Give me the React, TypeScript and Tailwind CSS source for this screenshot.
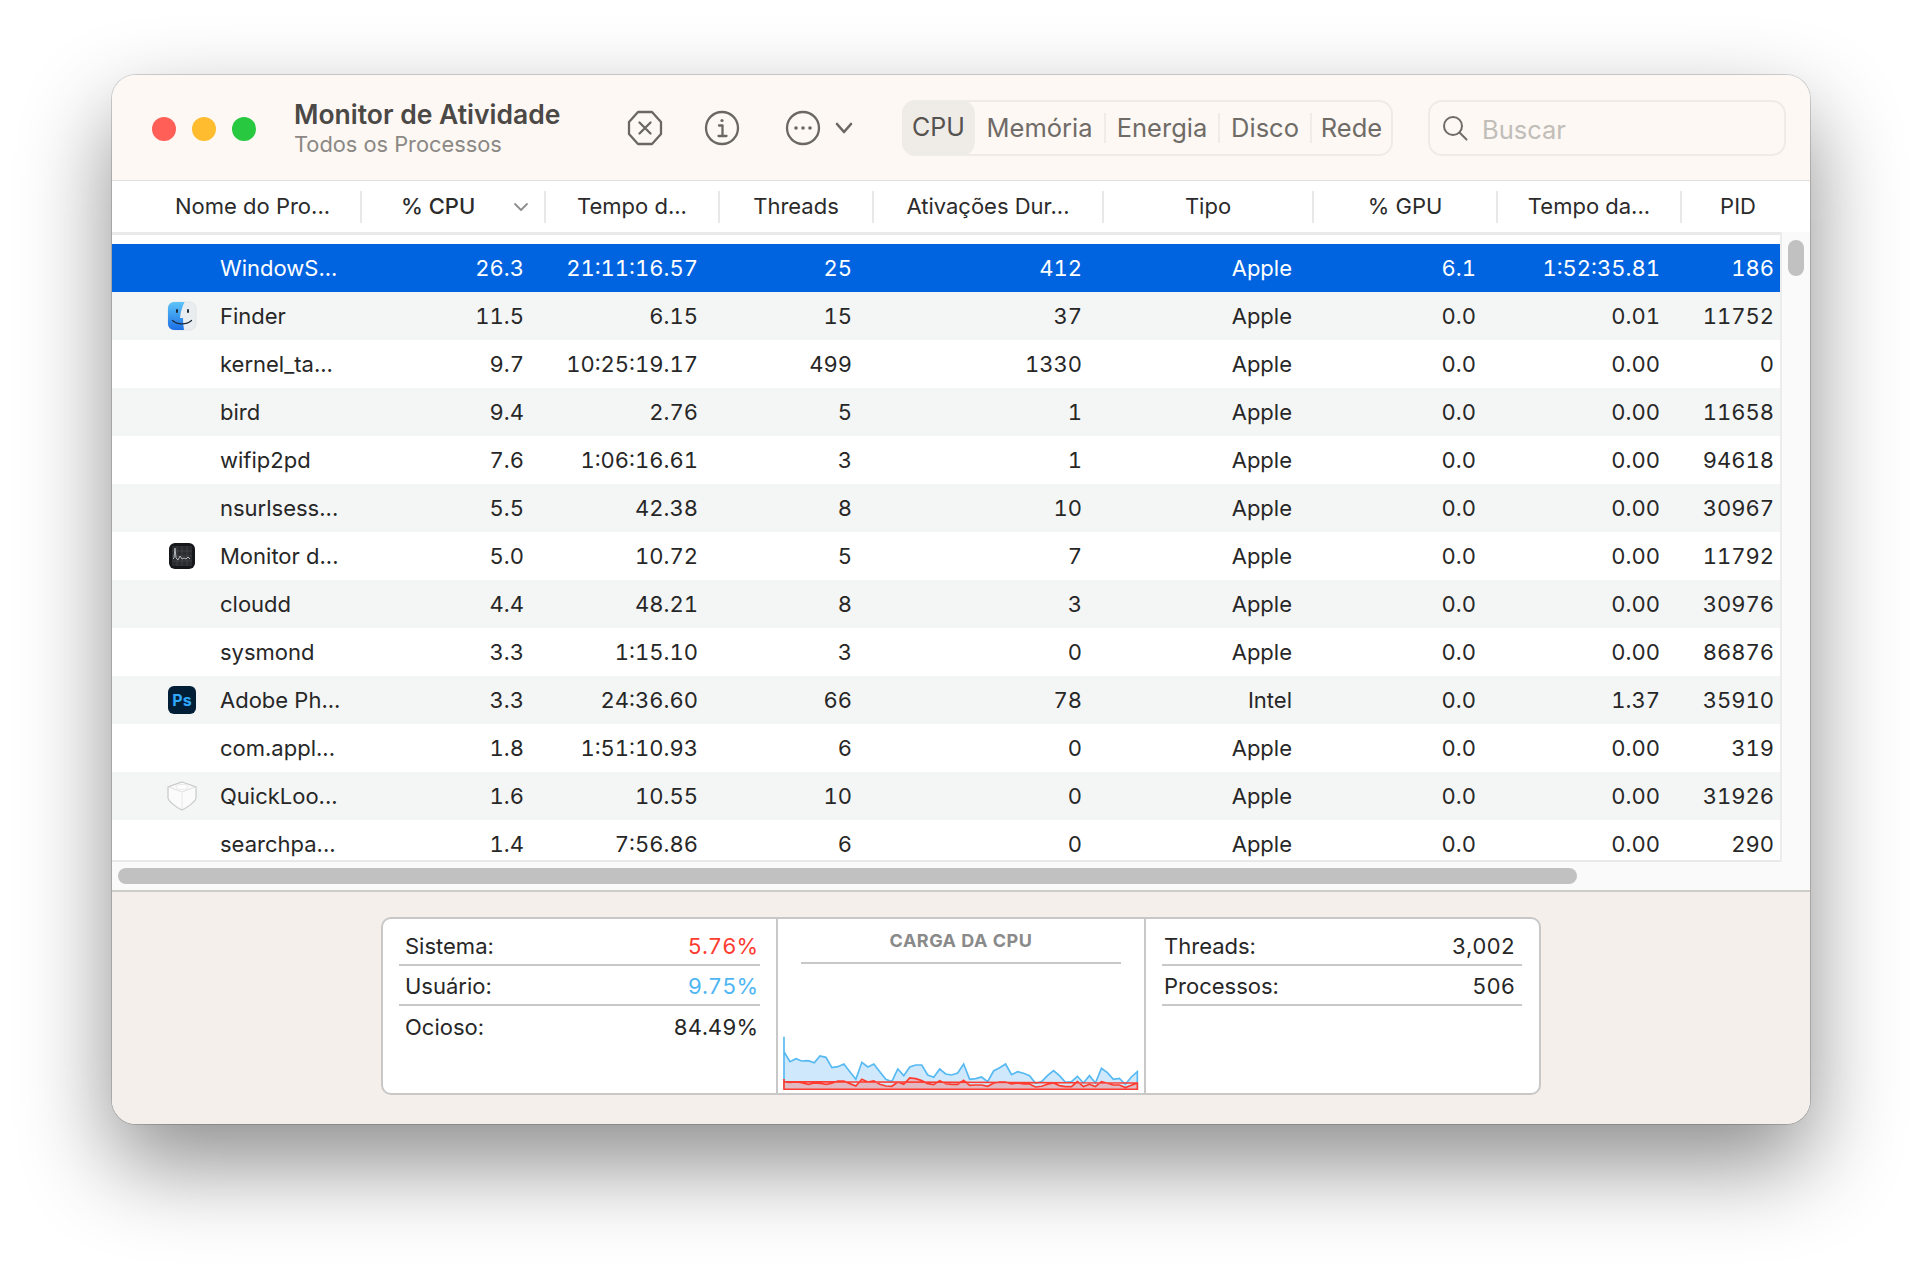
const COLUMNS = "grid-cols-[249px_184px_174px_154px_230px_210px_184px_184px_99px]";

const HEADERS = ["Tempo d...", "Threads", "Ativações Dur...", "Tipo", "% GPU", "Tempo da..."];

type Row = { icon?: "finder" | "monitor" | "ps" | "quicklook"; cells: string[] };

const ROWS: Row[] = [
  { cells: ["WindowS...", "26.3", "21:11:16.57", "25", "412", "Apple", "6.1", "1:52:35.81", "186"] },
  { icon: "finder", cells: ["Finder", "11.5", "6.15", "15", "37", "Apple", "0.0", "0.01", "11752"] },
  { cells: ["kernel_ta...", "9.7", "10:25:19.17", "499", "1330", "Apple", "0.0", "0.00", "0"] },
  { cells: ["bird", "9.4", "2.76", "5", "1", "Apple", "0.0", "0.00", "11658"] },
  { cells: ["wifip2pd", "7.6", "1:06:16.61", "3", "1", "Apple", "0.0", "0.00", "94618"] },
  { cells: ["nsurlsess...", "5.5", "42.38", "8", "10", "Apple", "0.0", "0.00", "30967"] },
  { icon: "monitor", cells: ["Monitor d...", "5.0", "10.72", "5", "7", "Apple", "0.0", "0.00", "11792"] },
  { cells: ["cloudd", "4.4", "48.21", "8", "3", "Apple", "0.0", "0.00", "30976"] },
  { cells: ["sysmond", "3.3", "1:15.10", "3", "0", "Apple", "0.0", "0.00", "86876"] },
  { icon: "ps", cells: ["Adobe Ph...", "3.3", "24:36.60", "66", "78", "Intel", "0.0", "1.37", "35910"] },
  { cells: ["com.appl...", "1.8", "1:51:10.93", "6", "0", "Apple", "0.0", "0.00", "319"] },
  { icon: "quicklook", cells: ["QuickLoo...", "1.6", "10.55", "10", "0", "Apple", "0.0", "0.00", "31926"] },
  { cells: ["searchpa...", "1.4", "7:56.86", "6", "0", "Apple", "0.0", "0.00", "290"] },
];

const BLUE = "42,100 60,130 78,121 95,128 115,127 133,133 150,113 168,117 186,148 204,145 222,137 240,160 258,183 276,132 294,146 312,137 330,160 348,183 366,190 384,152 402,172 420,146 438,140 456,140 474,170 492,177 510,152 528,167 546,170 564,164 582,137 600,183 618,181 636,176 654,190 672,158 690,148 708,137 726,169 744,160 762,165 780,172 798,195 816,190 834,172 852,157 870,172 888,192 906,190 924,174 942,194 960,172 978,194 996,150 1014,163 1032,183 1050,180 1068,198 1086,176 1104,160";
const RED = "42,190 60,192 78,191 95,193 115,198 133,194 150,195 168,198 186,195 204,188 222,188 240,196 258,203 276,183 294,191 312,188 330,198 348,203 366,204 384,191 402,198 420,179 438,181 456,187 474,196 492,199 510,187 528,196 546,198 564,198 582,186 600,201 618,200 636,200 654,204 672,195 690,191 708,191 726,197 744,194 762,197 780,197 798,206 816,204 834,198 852,194 870,202 888,205 906,205 924,190 942,205 960,198 978,205 996,190 1014,195 1032,200 1050,200 1068,208 1086,201 1104,194";

function FinderIcon() {
  return (
    <svg width="30" height="30" viewBox="0 0 30 30">
      <defs>
        <linearGradient id="finderBlue" x1="0" y1="0" x2="0" y2="1">
          <stop offset="0" stopColor="#5cc4f8" />
          <stop offset="1" stopColor="#1c6fe6" />
        </linearGradient>
      </defs>
      <rect x="1" y="1" width="28" height="28" rx="6" fill="#e9edf0" stroke="#d5d8da" strokeWidth=".5" />
      <path d="M7 1h10.500C15 6 13.400 12 13 17h3c0 4 .3 8 1 12H7a6 6 0 0 1-6-6V7a6 6 0 0 1 6-6z" fill="url(#finderBlue)" />
      <rect x="9" y="8" width="2" height="4" rx="1" fill="#1d2b3a" />
      <rect x="20" y="8" width="2" height="4" rx="1" fill="#1d2b3a" />
      <path d="M5.500 19.500c5 4.500 14 4.500 19 0" fill="none" stroke="#1d2b3a" strokeWidth="1.300" strokeLinecap="round" />
    </svg>
  );
}

function MonitorIcon() {
  return (
    <svg width="28" height="28" viewBox="0 0 28 28">
      <rect x="1" y="1" width="26" height="26" rx="6" fill="#15171a" />
      <rect x="4" y="4" width="20" height="20" fill="#2a2c2f" />
      <path d="M4 9h20M4 14h20M4 19h20M9 4v20M14 4v20M19 4v20" stroke="#4a4d50" strokeWidth=".6" />
      <path d="M5 17l1-1 1-10 1 10 2 2 2-4 2 3 2-1 2 1 2-2 2 2" fill="none" stroke="#b4b8bc" strokeWidth="1" />
    </svg>
  );
}

function PsIcon() {
  return (
    <div className="w-[28px] h-[28px] rounded-[6px] bg-[#001e36] flex items-center justify-center text-[#31a8ff] text-[16px] font-bold leading-none">
      Ps
    </div>
  );
}

function QuickLookIcon() {
  return (
    <svg width="32" height="32" viewBox="0 0 32 32">
      <path d="M16 2l14 5v11c0 3-9 10-14 12C11 28 2 21 2 18V7z" fill="#fbfbfb" stroke="#c9c9c9" strokeWidth="1.200" />
      <path d="M3 7l13 5 13-5" fill="none" stroke="#e0e0e0" strokeWidth="1" />
      <path d="M16 12v17" stroke="#e8e8e8" strokeWidth="1" />
      <ellipse cx="16" cy="7" rx="6" ry="2.500" fill="#fff" stroke="#e2e2e2" strokeWidth=".8" />
    </svg>
  );
}

function ProcessIcon({ name }: { name: Row["icon"] }) {
  if (name === "finder") return <FinderIcon />;
  if (name === "monitor") return <MonitorIcon />;
  if (name === "ps") return <PsIcon />;
  if (name === "quicklook") return <QuickLookIcon />;
  return null;
}

function TableRow({ row, index }: { row: Row; index: number }) {
  const selected = index === 0;
  const [name, ...rest] = row.cells;
  return (
    <div
      className={`grid ${COLUMNS} h-[48px] items-center text-[22px] ${
        selected ? "bg-[#0064e1] text-white" : index % 2 === 1 ? "bg-[#f4f5f5] text-[#272727]" : "bg-white text-[#272727]"
      }`}
    >
      <div className="flex items-center">
        <div className="w-[108px] pl-[32px] flex items-center justify-center">
          <ProcessIcon name={row.icon} />
        </div>
        <span>{name}</span>
      </div>
      {rest.map((cell, i) => (
        <div key={i} className={`text-right tabular-nums ${i === 7 ? "pr-[6px]" : "pr-[21px]"}`}>
          {cell}
        </div>
      ))}
    </div>
  );
}

function TitleBar() {
  return (
    <div className="h-[106px] shrink-0 flex bg-[#fdf8f3] border-b-[1px] border-[#e2dfdc] rounded-t-[24px]">
      <div className="flex items-center gap-[16px] ml-[40px] mt-[1px] h-full">
        <span className="w-[24px] h-[24px] rounded-full bg-[#ff5f57]" />
        <span className="w-[24px] h-[24px] rounded-full bg-[#febc2e]" />
        <span className="w-[24px] h-[24px] rounded-full bg-[#28c840]" />
      </div>
      <div className="ml-[38px] pt-[22px] w-[333px] shrink-0">
        <div className="text-[26.5px] leading-[34px] font-semibold text-[#4b4846]">Monitor de Atividade</div>
        <div className="text-[21.8px] leading-[27px] text-[#8b8885]">Todos os Processos</div>
      </div>
      <div className="flex items-center h-full text-[#6a6764]">
        <svg width="36" height="36" viewBox="0 0 36 36" fill="none" stroke="currentColor" strokeWidth="2.300">
          <path d="M11 2h14l9 10v12l-9 10H11L2 24V12z" strokeLinejoin="round" />
          <path d="M12.500 12.500l11 11M23.500 12.500l-11 11" strokeLinecap="round" />
        </svg>
        <svg className="ml-[41px]" width="36" height="36" viewBox="0 0 36 36" fill="none" stroke="currentColor" strokeWidth="2.300">
          <circle cx="18" cy="18" r="16" />
          <circle cx="18" cy="10.500" r="1.600" fill="currentColor" stroke="none" />
          <path d="M15 15.500h3.500V26M14.500 26h8" strokeLinecap="round" strokeLinejoin="round" />
        </svg>
        <svg className="ml-[45px]" width="36" height="36" viewBox="0 0 36 36" fill="none" stroke="currentColor" strokeWidth="2.300">
          <circle cx="18" cy="18" r="16" />
          <circle cx="11" cy="18" r="1.800" fill="currentColor" stroke="none" />
          <circle cx="18" cy="18" r="1.800" fill="currentColor" stroke="none" />
          <circle cx="25" cy="18" r="1.800" fill="currentColor" stroke="none" />
        </svg>
        <svg className="ml-[14px]" width="18" height="12" viewBox="0 0 18 12" fill="none" stroke="currentColor" strokeWidth="2.600">
          <path d="M2 2l7 8 7-8" strokeLinecap="round" strokeLinejoin="round" />
        </svg>
      </div>
      <div className="ml-[49px] mt-[25px] h-[56px] w-[491px] shrink-0 flex items-center rounded-[14px] border-[2px] border-[#efebe6] text-[25.5px] text-[#6f6b67]">
        <div className="w-[73px] h-[56px] -ml-[2px] rounded-[14px] bg-[#efebe6] text-[25px] text-[#55524f] flex items-center justify-center">CPU</div>
        <div className="w-[129px] text-center">Memória</div>
        <div className="h-[30px] w-[2px] bg-[#f0ece7]" />
        <div className="w-[112px] text-center">Energia</div>
        <div className="h-[30px] w-[2px] bg-[#f0ece7]" />
        <div className="w-[90px] text-center">Disco</div>
        <div className="h-[30px] w-[2px] bg-[#f0ece7]" />
        <div className="w-[79px] text-center">Rede</div>
      </div>
      <div className="ml-[35px] mt-[25px] h-[56px] w-[358px] shrink-0 flex items-center rounded-[14px] border-[2px] border-[#efebe6] pl-[12px]">
        <svg width="26" height="26" viewBox="0 0 26 26" fill="none" stroke="#6f6b67" strokeWidth="2">
          <circle cx="11" cy="11" r="9" />
          <path d="M17.500 17.500l7 7" strokeLinecap="round" />
        </svg>
        <span className="ml-[14px] mt-[5px] text-[25.5px] text-[#c1bdb9]">Buscar</span>
      </div>
    </div>
  );
}

function TableHeader() {
  return (
    <div className="h-[51px] shrink-0 flex items-center bg-white text-[22px] text-[#2b2b2b]">
      <div className="w-[250px] h-[32px] pl-[63px] flex items-center border-r-[2px] border-[#e8e8e8]">Nome do Pro...</div>
      <div className="w-[184px] h-[32px] pl-[39px] flex items-center font-medium border-r-[2px] border-[#e8e8e8]">
        % CPU
        <svg className="ml-[38px]" width="16" height="10" viewBox="0 0 16 10" fill="none" stroke="#8e8e8e" strokeWidth="1.800">
          <path d="M2 2l6 6 6-6" strokeLinecap="round" strokeLinejoin="round" />
        </svg>
      </div>
      {HEADERS.map((h, i) => (
        <div
          key={h}
          className={`h-[32px] flex items-center justify-center border-r-[2px] border-[#e8e8e8] ${
            ["w-[174px]", "w-[154px]", "w-[230px]", "w-[210px]", "w-[184px]", "w-[184px]"][i]
          }`}
        >
          {h}
        </div>
      ))}
      <div className="w-[112px] text-center">PID</div>
    </div>
  );
}

function StatRow({ label, value, tone, line, inset }: { label: string; value: string; tone?: string; line?: boolean; inset: string }) {
  return (
    <div className={`h-[40px] pt-[2px] flex items-center justify-between ${inset} ${line ? "border-b-[2px] border-[#c8c8c8]" : ""}`}>
      <span>{label}</span>
      <span className={`tabular-nums ${tone ?? ""}`}>{value}</span>
    </div>
  );
}

export default function App() {
  return (
    <div className="w-[1922px] h-[1272px] overflow-hidden bg-white pt-[75px] pl-[112px] font-['Inter',sans-serif]">
      <div className="w-[1698px] h-[1049px] flex flex-col rounded-[24px] bg-white shadow-[0_40px_90px_0_rgba(0,0,0,0.45),0_0_0_1px_rgba(0,0,0,0.16)]">
        <TitleBar />
        <TableHeader />
        <div className="flex h-[630px] shrink-0">
          <div className="w-[1668px] pt-[9px] h-full overflow-hidden border-t-[3px] border-b-[2px] border-[#e9e9e9]">
            {ROWS.map((row, i) => (
              <TableRow key={row.cells[0]} row={row} index={i} />
            ))}
          </div>
          <div className="flex-1 pt-[8px] pl-[6px] bg-[#fafafa] border-l-[2px] border-[#ececec]">
            <div className="w-[16px] h-[36px] rounded-full bg-[#c1c1c1]" />
          </div>
        </div>
        <div className="h-[30px] shrink-0 pl-[6px] pt-[6px] bg-[#fafafa] border-b-[2px] border-[#cfcdca]">
          <div className="w-[1459px] h-[16px] rounded-full bg-[#c1c1c1]" />
        </div>
        <div className="flex-1 bg-[#f4efeb] rounded-b-[24px] pt-[25px] pl-[269px]">
          <div className="w-[1160px] h-[178px] flex rounded-[10px] border-[2px] border-[#c8c8c8] bg-white text-[22px] text-[#272727]">
            <div className="w-[395px] pl-[16px] pr-[16px] pt-[7px] border-r-[2px] border-[#c8c8c8]">
              <StatRow inset="pl-[6px] pr-[2px]" label="Sistema:" value="5.76%" tone="text-[#ff3b30]" line />
              <StatRow inset="pl-[6px] pr-[2px]" label="Usuário:" value="9.75%" tone="text-[#4fb6f4]" line />
              <StatRow inset="pl-[6px] pr-[2px]" label="Ocioso:" value="84.49%" />
            </div>
            <div className="w-[368px] flex flex-col items-center border-r-[2px] border-[#c8c8c8]">
              <div className="w-[320px] h-[45px] pt-[8px] text-center text-[18px] font-bold tracking-[0.5px] text-[#8a8a8a] border-b-[2px] border-[#c8c8c8]">
                CARGA DA CPU
              </div>
              <svg className="mt-auto mb-[2px] mr-[2px] w-[360px] h-[56px]" viewBox="30 50 1082 168">
                <polygon points={`42,55 ${BLUE} 1104,213 42,213`} fill="#cfe8fb" />
                <polyline points={`42,213 42,55 ${BLUE} 1104,213`} fill="none" stroke="#56b9f2" strokeWidth="5" />
                <polygon points={`42,182 ${RED} 1104,213 42,213`} fill="#e1b9c2" />
                <polyline points={`42,182 42,213 1104,213 1104,194 ${RED}`} fill="none" stroke="#ff3b30" strokeWidth="5" />
              </svg>
            </div>
            <div className="flex-1 pl-[16px] pr-[17px] pt-[7px]">
              <StatRow inset="pl-[2px] pr-[7px]" label="Threads:" value="3,002" line />
              <StatRow inset="pl-[2px] pr-[7px]" label="Processos:" value="506" line />
            </div>
          </div>
        </div>
      </div>
    </div>
  );
}
